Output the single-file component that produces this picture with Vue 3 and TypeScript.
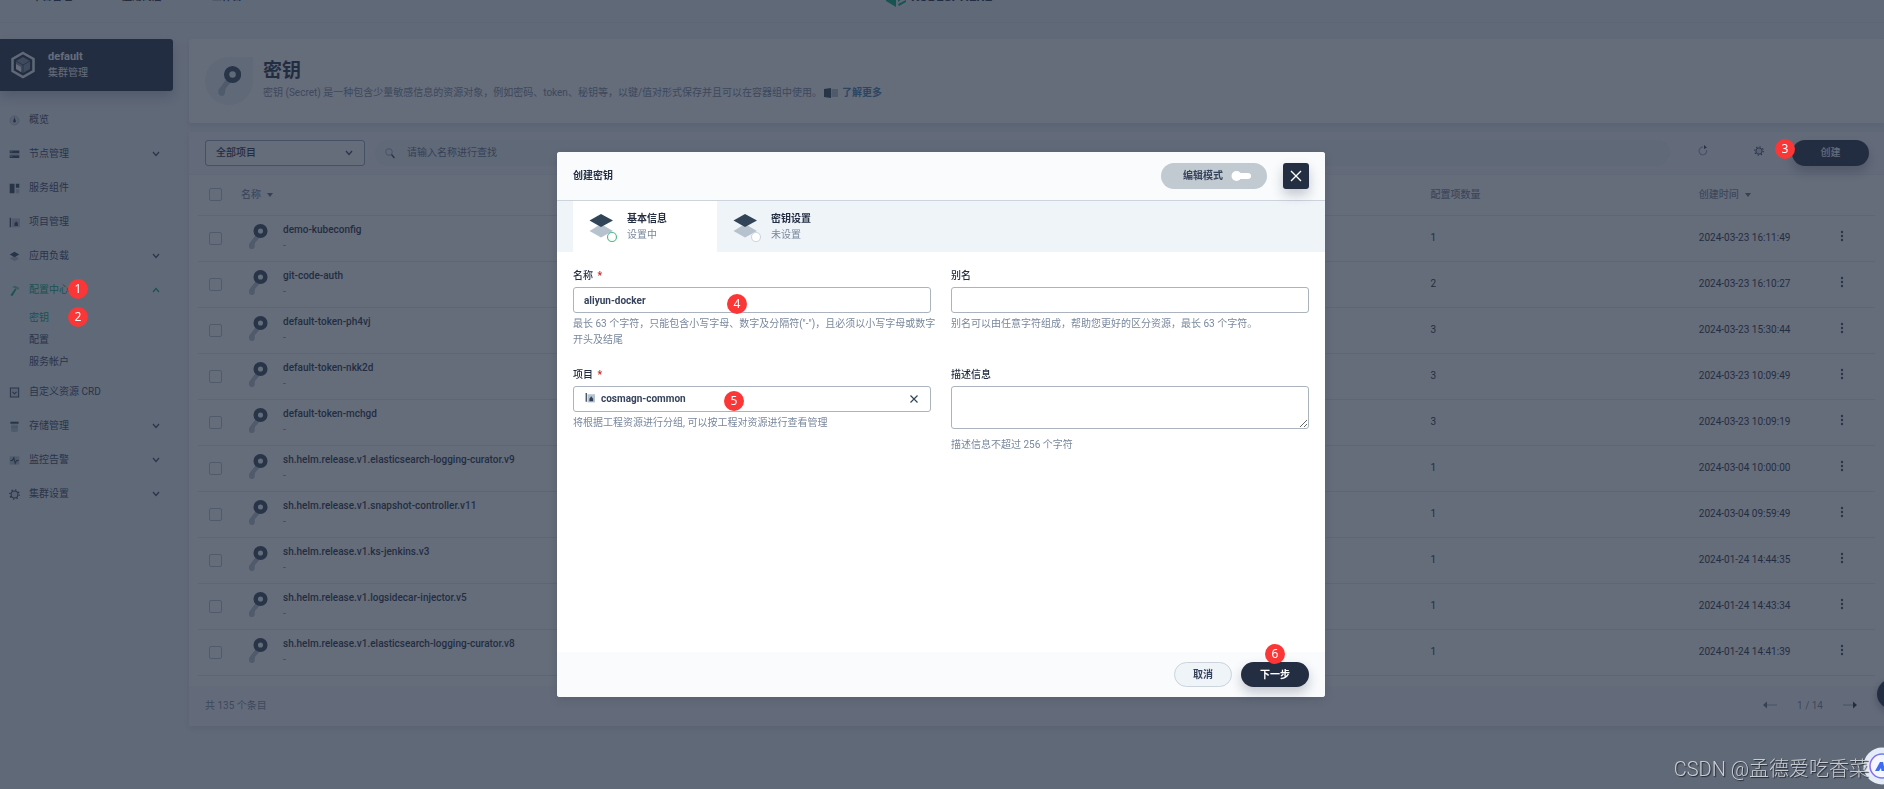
<script setup lang="ts">
import { ref } from 'vue'

interface NavItem {
  label: string
  icon: string
  arrow?: boolean
  open?: boolean
  mark?: number
  children?: { label: string; active?: boolean; mark?: number }[]
}

interface Secret {
  name: string
  count: number
  time: string
}

const topLinks = ['平台管理', '应用商店', '工作台']

const nav: NavItem[] = [
  { label: '概览', icon: 'overview' },
  { label: '节点管理', icon: 'nodes', arrow: true },
  { label: '服务组件', icon: 'components' },
  { label: '项目管理', icon: 'project' },
  { label: '应用负载', icon: 'layers', arrow: true },
  {
    label: '配置中心',
    icon: 'hammer',
    arrow: true,
    open: true,
    mark: 1,
    children: [
      { label: '密钥', active: true, mark: 2 },
      { label: '配置' },
      { label: '服务帐户' },
    ],
  },
  { label: '自定义资源 CRD', icon: 'crd' },
  { label: '存储管理', icon: 'storage', arrow: true },
  { label: '监控告警', icon: 'monitor', arrow: true },
  { label: '集群设置', icon: 'gear', arrow: true },
]

const secrets: Secret[] = [
  { name: 'demo-kubeconfig', count: 1, time: '2024-03-23 16:11:49' },
  { name: 'git-code-auth', count: 2, time: '2024-03-23 16:10:27' },
  { name: 'default-token-ph4vj', count: 3, time: '2024-03-23 15:30:44' },
  { name: 'default-token-nkk2d', count: 3, time: '2024-03-23 10:09:49' },
  { name: 'default-token-mchgd', count: 3, time: '2024-03-23 10:09:19' },
  { name: 'sh.helm.release.v1.elasticsearch-logging-curator.v9', count: 1, time: '2024-03-04 10:00:00' },
  { name: 'sh.helm.release.v1.snapshot-controller.v11', count: 1, time: '2024-03-04 09:59:49' },
  { name: 'sh.helm.release.v1.ks-jenkins.v3', count: 1, time: '2024-01-24 14:44:35' },
  { name: 'sh.helm.release.v1.logsidecar-injector.v5', count: 1, time: '2024-01-24 14:43:34' },
  { name: 'sh.helm.release.v1.elasticsearch-logging-curator.v8', count: 1, time: '2024-01-24 14:41:39' },
]

const steps = [
  { title: '基本信息', state: '设置中', current: true },
  { title: '密钥设置', state: '未设置', current: false },
]

const scope = ref('全部项目')
const keyword = ref('')
const form = ref({ name: 'aliyun-docker', alias: '', project: 'cosmagn-common', description: '' })
</script>

<template>
  <div class="page">
    <header class="topbar">
      <nav class="top-links">
        <a v-for="l in topLinks" :key="l" href="#">{{ l }}</a>
      </nav>
      <a class="brand" href="#">
        <svg width="20" height="22" viewBox="0 0 20 22">
          <path d="M0 5 10 0 20 5 10 10Z" fill="#00aa72" />
          <path d="M0 7 10 12V22L0 16Z" fill="#00aa72" />
          <path d="M12 13 20 8V11L12 17Z M12 19 20 15 20 17 13 21Z" fill="#00aa72" />
        </svg>
        <span>KUBESPHERE</span>
      </a>
    </header>

    <div class="layout">
      <aside class="sidebar">
        <button class="cluster" type="button">
          <svg width="26" height="28" viewBox="0 0 26 28">
            <path d="M13 2 23.500 8V20L13 26 2.500 20V8Z" fill="none" stroke="#eff4f9" stroke-width="2.500" />
            <path d="M13 6 20 10V18L13 22 6 18V10Z" fill="#7f8ca0" />
            <path d="M6 13 11 16V21L6 18Z" fill="#fff" />
            <path d="M6 10 13 14 20 10M13 14V22" fill="none" stroke="#324558" stroke-width="1" />
          </svg>
          <span class="cluster-text"><strong>default</strong><span>集群管理</span></span>
        </button>

        <ul class="menu">
          <li v-for="item in nav" :key="item.label">
            <a href="#" class="menu-item" :class="{ active: item.open }">
              <svg class="menu-icon" width="11" height="11" viewBox="0 0 16 16">
                <template v-if="item.icon === 'overview'">
                  <circle cx="8" cy="8" r="6.500" fill="#d5dde5" stroke="#9aa8b8" />
                  <path d="M8 3 10 9a2 2 0 1 1-4 0Z" fill="#324558" />
                </template>
                <template v-else-if="item.icon === 'nodes'">
                  <path d="M1 2h14v4H1zM1 9h14v4H1z" fill="#324558" />
                  <path d="M1 6h14v3H1z" fill="#b6c2cd" />
                  <path d="M5 4h-3M5 11h-3" stroke="#b6c2cd" />
                </template>
                <template v-else-if="item.icon === 'components'">
                  <path d="M1 1h7v14H1zM10 1h5v6h-5z" fill="#324558" />
                  <path d="M10 9h5v6h-5z" fill="#b6c2cd" />
                </template>
                <template v-else-if="item.icon === 'project'">
                  <path d="M4 2h12v13H4z" fill="#b6c2cd" />
                  <path d="M1 1h2v14H1zM8 13V9l2.500-3L13 9v4z" fill="#324558" />
                </template>
                <template v-else-if="item.icon === 'layers'">
                  <path d="M1 11 8 7 15 11 8 15Z" fill="#b6c2cd" />
                  <path d="M1 5 8 1 15 5 8 9Z" fill="#324558" />
                </template>
                <template v-else-if="item.icon === 'hammer'">
                  <path d="M4 3 9 1 15 4 14 7 10 5Z" fill="#79c9a4" />
                  <path d="M9 5 11 6 5 16 2 15Z" fill="#00aa72" />
                </template>
                <template v-else-if="item.icon === 'crd'">
                  <path d="M2 1.500h12v13H2z" fill="#d5dde5" stroke="#324558" stroke-width="1.500" />
                  <path d="M5 7 8 10 11 7" fill="none" stroke="#324558" stroke-width="1.500" />
                </template>
                <template v-else-if="item.icon === 'storage'">
                  <path d="M3 5h10v9a5 2 0 0 1-10 0z" fill="#b6c2cd" />
                  <path d="M2 1h12v3H2z" fill="#324558" />
                  <path d="M3 9h10" stroke="#8391a2" />
                </template>
                <template v-else-if="item.icon === 'monitor'">
                  <path d="M1 2h14v12H1z" fill="#b6c2cd" />
                  <path d="M2 8h3l2-4 2 8 2-4h3" fill="none" stroke="#324558" stroke-width="1.500" />
                </template>
                <template v-else>
                  <circle cx="8" cy="8" r="5" fill="#d5dde5" stroke="#324558" stroke-width="1.500" />
                  <circle cx="8" cy="8" r="6.800" fill="none" stroke="#324558" stroke-width="2" stroke-dasharray="2 3.340" />
                </template>
              </svg>
              <span>{{ item.label }}</span>
              <svg v-if="item.arrow" class="chevron" :class="{ up: item.open }" width="8" height="6" viewBox="0 0 8 6">
                <path d="M1 1 4 4.500 7 1" fill="none" stroke="currentColor" stroke-width="1.200" />
              </svg>
              <i v-if="item.mark" class="mark mark-nav">{{ item.mark }}</i>
            </a>
            <ul v-if="item.children" class="submenu">
              <li v-for="c in item.children" :key="c.label">
                <a href="#" :class="{ active: c.active }">{{ c.label }}<i v-if="c.mark" class="mark mark-nav">{{ c.mark }}</i></a>
              </li>
            </ul>
          </li>
        </ul>
      </aside>

      <main class="content">
        <section class="banner">
          <div class="banner-icon">
            <svg width="24" height="32" viewBox="0 0 20 27">
              <path d="M8.500 11 12 14 7 20 6.500 24.500A3 3 0 0 1 1 24V21Z" fill="#b6c2cd" />
              <circle cx="13" cy="8" r="5" fill="none" stroke="#324558" stroke-width="4.500" />
            </svg>
          </div>
          <div>
            <h1>密钥</h1>
            <p>
              <span>密钥 (Secret) 是一种包含少量敏感信息的资源对象，例如密码、token、秘钥等，以键/值对形式保存并且可以在容器组中使用。</span>
              <a href="#">
                <svg width="14" height="10" viewBox="0 0 14 10">
                  <path d="M0 1 7 0V10L0 9Z" fill="#324558" /><path d="M7.500 1H14V9H7.500Z" fill="#b6c2cd" />
                </svg>
                了解更多
              </a>
            </p>
          </div>
        </section>

        <section class="panel">
          <div class="toolbar">
            <div class="scope">
              <select v-model="scope" aria-label="项目">
                <option>全部项目</option>
              </select>
              <svg width="8" height="6" viewBox="0 0 8 6">
                <path d="M1 1 4 4.500 7 1" fill="none" stroke="#324558" stroke-width="1.200" />
              </svg>
            </div>
            <label class="search">
              <svg width="10" height="11" viewBox="0 0 10 11">
                <circle cx="4" cy="4" r="3.300" fill="none" stroke="#9aa8b8" />
                <path d="M6.500 6.500 9.500 10" stroke="#324558" stroke-width="1.500" />
              </svg>
              <input v-model="keyword" type="text" placeholder="请输入名称进行查找" aria-label="查找" />
            </label>
            <button class="tool" type="button" aria-label="刷新">
              <svg width="10" height="11" viewBox="0 0 10 11">
                <path d="M8.500 5A3.800 3.800 0 1 1 5 2.200" fill="none" stroke="#9aa8b8" stroke-width="1.200" />
                <path d="M6 0 9 2.500 6 4Z" fill="#324558" />
              </svg>
            </button>
            <button class="tool" type="button" aria-label="设置">
              <svg width="10" height="10" viewBox="0 0 16 16">
                <circle cx="8" cy="8" r="5" fill="#d5dde5" stroke="#324558" stroke-width="1.500" />
                <circle cx="8" cy="8" r="6.800" fill="none" stroke="#324558" stroke-width="2" stroke-dasharray="2 3.340" />
              </svg>
            </button>
            <button class="create" type="button">创建<i class="mark mark-create">3</i></button>
          </div>

          <div class="table-wrap">
            <table>
              <colgroup>
                <col class="c-check" /><col /><col class="c-count" /><col class="c-time" /><col class="c-more" />
              </colgroup>
              <thead>
                <tr>
                  <th class="check"><input type="checkbox" aria-label="全选" /></th>
                  <th>名称<span class="sort"></span></th>
                  <th>配置项数量</th>
                  <th>创建时间<span class="sort"></span></th>
                  <th></th>
                </tr>
              </thead>
              <tbody>
                <tr v-for="s in secrets" :key="s.name">
                  <td class="check"><input type="checkbox" :aria-label="s.name" /></td>
                  <td>
                    <div class="name-cell">
                      <svg width="20" height="27" viewBox="0 0 20 27">
                        <path d="M8.500 11 12 14 7 20 6.500 24.500A3 3 0 0 1 1 24V21Z" fill="#b6c2cd" />
                        <circle cx="12.500" cy="8" r="4.800" fill="none" stroke="#324558" stroke-width="4.500" />
                      </svg>
                      <div><a href="#">{{ s.name }}</a><p>-</p></div>
                    </div>
                  </td>
                  <td>{{ s.count }}</td>
                  <td>{{ s.time }}</td>
                  <td class="more">
                    <button type="button" aria-label="更多">
                      <svg width="4" height="12" viewBox="0 0 4 12" fill="#324558">
                        <circle cx="2" cy="2" r="1.200" /><circle cx="2" cy="6" r="1.200" /><circle cx="2" cy="10" r="1.200" />
                      </svg>
                    </button>
                  </td>
                </tr>
              </tbody>
            </table>
          </div>

          <footer class="panel-foot">
            <span>共 135 个条目</span>
            <div class="pager">
              <button type="button" aria-label="上一页">
                <svg width="14" height="8" viewBox="0 0 14 8">
                  <path d="M4 4H14" stroke="#b6c2cd" stroke-width="1.500" /><path d="M0 4 4 0.500V7.500Z" fill="#5f6f84" />
                </svg>
              </button>
              <span>1 / 14</span>
              <button type="button" aria-label="下一页">
                <svg width="14" height="8" viewBox="0 0 14 8">
                  <path d="M0 4H10" stroke="#b6c2cd" stroke-width="1.500" /><path d="M14 4 10 0.500V7.500Z" fill="#242e42" />
                </svg>
              </button>
            </div>
          </footer>
        </section>
      </main>
    </div>
    <div class="float-dot"></div>
  </div>

  <div class="mask">
    <form class="dialog" role="dialog" aria-labelledby="dialog-title" @submit.prevent>
      <header class="dialog-head">
        <h2 id="dialog-title">创建密钥</h2>
        <button class="mode" type="button">
          编辑模式
          <svg width="20" height="12" viewBox="0 0 20 12" fill="#fff">
            <circle cx="5.500" cy="6" r="5" /><rect x="6" y="3" width="14" height="6" rx="3" />
          </svg>
        </button>
        <button class="close" type="button" aria-label="关闭">
          <svg width="12" height="12" viewBox="0 0 12 12"><path d="M1 1 11 11M11 1 1 11" stroke="#fff" stroke-width="1.400" /></svg>
        </button>
      </header>

      <div class="steps">
        <div v-for="s in steps" :key="s.title" class="step" :class="{ current: s.current }">
          <svg width="30" height="30" viewBox="0 0 30 30">
            <path d="M0.500 19 12 12 24 19 12 25.500Z" fill="#b6c2cd" />
            <path d="M0.500 8.500 12 2 24 8.500 12 15Z" fill="#324558" />
            <circle cx="23" cy="25" r="4.500" fill="#fff" :stroke="s.current ? '#55bc8a' : '#d0d7df'" stroke-width="1.200" />
          </svg>
          <div><strong>{{ s.title }}</strong><span>{{ s.state }}</span></div>
        </div>
      </div>

      <div class="dialog-body">
        <div class="field">
          <label for="f-name">名称 <em>*</em></label>
          <div class="control">
            <input id="f-name" v-model="form.name" type="text" />
            <i class="mark mark-name">4</i>
          </div>
          <p>最长 63 个字符，只能包含小写字母、数字及分隔符("-")，且必须以小写字母或数字<br />开头及结尾</p>
        </div>
        <div class="field">
          <label for="f-alias">别名</label>
          <div class="control"><input id="f-alias" v-model="form.alias" type="text" /></div>
          <p>别名可以由任意字符组成，帮助您更好的区分资源，最长 63 个字符。</p>
        </div>
        <div class="field">
          <label for="f-project">项目 <em>*</em></label>
          <div class="control project">
            <svg class="project-icon" width="10" height="10" viewBox="0 0 16 16">
              <path d="M4 2h12v13H4z" fill="#b6c2cd" />
              <path d="M1 0h2v14H1zM7 13V9l3-4 3 4v4z" fill="#324558" />
            </svg>
            <select id="f-project" v-model="form.project">
              <option>cosmagn-common</option>
            </select>
            <button class="clear" type="button" aria-label="清除">
              <svg width="8" height="8" viewBox="0 0 8 8"><path d="M0.500 0.500 7.500 7.500M7.500 0.500 0.500 7.500" stroke="#324558" stroke-width="1.200" /></svg>
            </button>
            <i class="mark mark-project">5</i>
          </div>
          <p>将根据工程资源进行分组, 可以按工程对资源进行查看管理</p>
        </div>
        <div class="field">
          <label for="f-desc">描述信息</label>
          <div class="control"><textarea id="f-desc" v-model="form.description"></textarea></div>
          <p class="far">描述信息不超过 256 个字符</p>
        </div>
      </div>

      <footer class="dialog-foot">
        <button class="cancel" type="button">取消</button>
        <button class="next" type="submit">下一步<i class="mark mark-next">6</i></button>
      </footer>
    </form>
  </div>

  <div class="watermark">CSDN @孟德爱吃香菜</div>
  <button class="assistant" type="button" aria-label="助手">
    <svg width="38" height="38" viewBox="0 0 38 38">
      <defs>
        <linearGradient id="ring" x1="0" y1="0" x2="1" y2="0"><stop offset="0" stop-color="#8c6cf0" /><stop offset="1" stop-color="#4f8df5" /></linearGradient>
      </defs>
      <circle cx="19" cy="19" r="18.500" fill="#e6ecf7" />
      <circle cx="19" cy="19" r="12" fill="#f4f7ff" stroke="url(#ring)" stroke-width="1.500" />
      <path d="M12 24 17 15H20L22 24H18.500L18 21 16 24Z" fill="#3f6df0" />
    </svg>
  </button>
</template>

<style>
body {
  margin: 0;
  background: #eff4f9;
}
</style>

<style scoped>
.page,
.mask,
.watermark {
  font-family: Roboto, "Noto Sans CJK SC", sans-serif;
  font-size: 10px;
  line-height: 16px;
  color: #242e42;
}
.page *,
.mask,
.mask * {
  box-sizing: border-box;
}
button,
input,
select,
textarea {
  font: inherit;
  color: inherit;
}
button {
  border: 0;
  padding: 0;
  background: none;
}
a {
  color: inherit;
  text-decoration: none;
}
ul {
  list-style: none;
  margin: 0;
  padding: 0;
}
h1,
h2,
p {
  margin: 0;
}
.page {
  position: relative;
  min-height: 100vh;
  overflow: hidden;
  background: #eff4f9;
}
.topbar {
  display: grid;
  grid-template-columns: 1fr auto 1fr;
  align-items: start;
  height: 23px;
  overflow: hidden;
  border-bottom: 1px solid #e3e9ef;
}
.top-links {
  display: flex;
  gap: 50px;
  margin-top: -11px;
  padding-left: 32px;
  font-weight: 700;
}
.brand {
  display: flex;
  gap: 5px;
  margin-top: -15px;
  padding-right: 6px;
  font-size: 13px;
  line-height: 24px;
  font-weight: 700;
}
.layout {
  display: flex;
  gap: 16px;
  padding-top: 16px;
}
.sidebar {
  flex: 0 0 173px;
}
.cluster {
  display: flex;
  align-items: center;
  gap: 12px;
  width: 100%;
  height: 52px;
  padding-left: 10px;
  border-radius: 0 3px 3px 0;
  background: #242e42;
  color: #fff;
  text-align: left;
  box-shadow: 0 6px 12px rgba(36, 46, 66, 0.25);
}
.cluster-text {
  display: grid;
}
.cluster-text strong {
  font-size: 11px;
}
.menu {
  margin-top: 12px;
  color: #36435c;
}
.menu-item {
  position: relative;
  display: flex;
  align-items: center;
  height: 34px;
  padding: 0 13px 0 9px;
}
.menu-icon {
  margin-right: 9px;
}
.chevron {
  margin-left: auto;
  color: #324558;
}
.chevron.up {
  transform: rotate(180deg);
  color: #00aa72;
}
.menu .active {
  color: #00aa72;
}
.submenu {
  padding-bottom: 2px;
}
.submenu a {
  position: relative;
  display: block;
  padding-left: 29px;
  line-height: 22px;
}
.mark {
  position: absolute;
  z-index: 30;
  width: 20px;
  height: 20px;
  border-radius: 50%;
  background: #fb3636;
  color: #fff;
  font-family: "Noto Sans", sans-serif;
  font-size: 12px;
  font-style: normal;
  font-weight: 400;
  line-height: 20px;
  text-align: center;
}
.mark-nav {
  left: 68px;
  top: calc(50% - 11px);
}
.content {
  flex: 1;
  min-width: 0;
}
.banner {
  display: flex;
  gap: 10px;
  height: 84px;
  padding: 18px 16px;
  border-radius: 3px 0 0 3px;
  background: #fff;
  box-shadow: 0 3px 6px rgba(36, 46, 66, 0.1);
}
.banner-icon {
  display: flex;
  align-items: center;
  justify-content: center;
  width: 48px;
  height: 48px;
  border-radius: 50% 0 50% 50%;
  background: #eff4f9;
}
.banner h1 {
  font-size: 19px;
  line-height: 28px;
}
.banner p {
  display: flex;
  gap: 2px;
  color: #79879c;
}
.banner p a {
  display: flex;
  align-items: center;
  gap: 4px;
  color: #3f7fae;
  font-weight: 700;
}
.panel {
  margin-top: 9px;
  background: #fff;
  border-radius: 3px 0 0 3px;
  box-shadow: 0 3px 6px rgba(36, 46, 66, 0.1);
}
.toolbar {
  display: flex;
  align-items: center;
  height: 43px;
  padding: 0 15px 0 16px;
  background: #f9fbfd;
  border-bottom: 1px solid #eff4f9;
}
.scope {
  position: relative;
  width: 160px;
  margin-right: 10px;
}
.scope select {
  appearance: none;
  width: 100%;
  height: 26px;
  padding: 0 10px;
  border: 1px solid #8fa0b3;
  border-radius: 3px;
  background: #fff;
  font-weight: 500;
}
.scope svg {
  position: absolute;
  right: 12px;
  top: 10px;
}
.search {
  flex: 1;
  display: flex;
  align-items: center;
  gap: 10px;
  height: 26px;
  padding: 0 10px;
  border-radius: 13px;
  background: #eff4f9;
}
.search input {
  flex: 1;
  border: 0;
  outline: 0;
  background: none;
}
.search input::placeholder {
  color: #5f6d84;
}
.tool {
  width: 56px;
  height: 26px;
}
.tool:first-of-type {
  margin-left: 5px;
}
.create {
  position: relative;
  width: 77px;
  height: 26px;
  margin-left: 5px;
  border-radius: 13px;
  background: #242e42;
  color: #fff;
  font-weight: 500;
  box-shadow: 0 6px 12px rgba(36, 46, 66, 0.3);
}
.mark-create {
  left: -17px;
  top: -1px;
}
.table-wrap {
  padding: 0 9px 10px;
}
table {
  width: 100%;
  table-layout: fixed;
  border-collapse: collapse;
}
.c-check {
  width: 43px;
}
.c-count {
  width: 16%;
}
.c-time {
  width: 8%;
}
.c-more {
  width: 42px;
}
th,
td {
  padding: 0;
  border-bottom: 1px solid #e3e9ef;
  text-align: left;
}
th {
  height: 40px;
  color: #79879c;
  font-weight: 500;
}
td {
  height: 46px;
}
.check {
  padding-left: 11px;
}
.check input {
  display: block;
  appearance: none;
  width: 13px;
  height: 13px;
  margin: 0;
  border: 1px solid #b6c2cd;
  border-radius: 2px;
}
.sort {
  display: inline-block;
  margin-left: 6px;
  border: 3px solid transparent;
  border-top: 4px solid #5f6f84;
  border-bottom: 0;
  vertical-align: 1px;
}
.name-cell {
  display: flex;
  gap: 15px;
  padding-left: 7px;
}
.name-cell svg {
  margin-top: 1px;
}
.name-cell a {
  font-weight: 500;
}
.name-cell p {
  color: #79879c;
}
.more {
  padding-left: 7px;
}
.more button {
  display: block;
}
.panel-foot {
  display: flex;
  align-items: center;
  justify-content: space-between;
  height: 40px;
  padding: 0 27px 0 16px;
  background: #f9fbfd;
  color: #79879c;
}
.pager {
  display: flex;
  align-items: center;
  gap: 20px;
}
.float-dot {
  position: absolute;
  right: -23px;
  bottom: 80px;
  width: 30px;
  height: 30px;
  border-radius: 50%;
  background: #242e42;
  box-shadow: 0 3px 8px rgba(36, 46, 66, 0.4);
}
.mask {
  position: fixed;
  inset: 0;
  z-index: 10;
  display: flex;
  align-items: flex-start;
  justify-content: center;
  padding: 152px 2px 0 0;
  background: rgba(36, 46, 66, 0.7);
}
.dialog {
  width: 768px;
  border-radius: 3px;
  background: #fff;
  box-shadow: 0 3px 8px rgba(36, 46, 66, 0.2);
}
.dialog-head {
  display: flex;
  align-items: center;
  height: 49px;
  padding: 0 16px;
  border-bottom: 1px solid #ccd3db;
  border-radius: 3px 3px 0 0;
  background: #f9fbfd;
}
.dialog-head h2 {
  font-size: 10px;
  line-height: 16px;
}
.mode {
  display: flex;
  align-items: center;
  justify-content: center;
  gap: 8px;
  width: 106px;
  height: 26px;
  margin-left: auto;
  padding-left: 6px;
  border-radius: 13px;
  background: #c1c9d1;
  color: #36435c;
  font-weight: 700;
}
.close {
  display: flex;
  align-items: center;
  justify-content: center;
  width: 26px;
  height: 26px;
  margin-left: 16px;
  border-radius: 3px;
  background: #242e42;
  box-shadow: 0 6px 12px rgba(36, 46, 66, 0.25);
}
.steps {
  display: flex;
  height: 51px;
  padding: 0 16px;
  background: #eff4f9;
}
.step {
  display: flex;
  align-items: center;
  gap: 8px;
  width: 144px;
  padding-left: 16px;
}
.step.current {
  background: #fff;
}
.step strong,
.step span {
  display: block;
}
.step span {
  color: #79879c;
}
.dialog-body {
  display: grid;
  grid-template-columns: minmax(0, 1fr) minmax(0, 1fr);
  grid-auto-rows: min-content;
  gap: 19px 20px;
  min-height: 400px;
  padding: 16px;
}
.field label {
  display: block;
  margin-bottom: 3px;
  font-weight: 500;
}
.field em {
  margin-left: 2px;
  color: #ca2621;
  font-style: normal;
  font-weight: 700;
}
.control {
  position: relative;
  display: flex;
}
.control input,
.control select,
.control textarea {
  appearance: none;
  width: 100%;
  height: 26px;
  padding: 0 10px;
  border: 1px solid #abb4be;
  border-radius: 3px;
  background: #fff;
  color: #36435c;
  font-weight: 700;
  outline: 0;
}
.control select {
  padding-left: 27px;
}
.control textarea {
  height: 43px;
  resize: vertical;
}
.project-icon {
  position: absolute;
  left: 12px;
  top: 7px;
}
.clear {
  position: absolute;
  right: 12px;
  top: 8px;
  width: 9px;
  height: 9px;
  line-height: 8px;
}
.clear svg {
  display: block;
}
.field p {
  margin-top: 3px;
  color: #79879c;
  white-space: nowrap;
}
.field .far {
  margin-top: 8px;
}
.mark-name {
  left: 154px;
  top: 7px;
}
.mark-project {
  left: 151px;
  top: 5px;
}
.dialog-foot {
  display: flex;
  align-items: center;
  justify-content: flex-end;
  gap: 9px;
  height: 45px;
  padding: 0 16px;
  border-radius: 0 0 3px 3px;
  background: #f9fbfd;
}
.cancel,
.next {
  height: 25px;
  border-radius: 13px;
  font-weight: 700;
}
.cancel {
  width: 58px;
  border: 1px solid #ccd3db;
  background: #eff4f9;
  color: #36435c;
}
.next {
  position: relative;
  width: 68px;
  background: #242e42;
  color: #fff;
  box-shadow: 0 6px 12px rgba(36, 46, 66, 0.25);
}
.mark-next {
  left: 24px;
  top: -18px;
}
.watermark {
  position: fixed;
  right: 15px;
  bottom: 6px;
  z-index: 25;
  font-size: 20px;
  font-weight: 300;
  line-height: 28px;
  color: #c9cdd2;
  text-shadow: 1px 1px 1px rgba(20, 26, 36, 0.8);
}
.assistant {
  position: fixed;
  right: -17px;
  bottom: 4px;
  z-index: 20;
}
.assistant svg {
  display: block;
}
</style>
